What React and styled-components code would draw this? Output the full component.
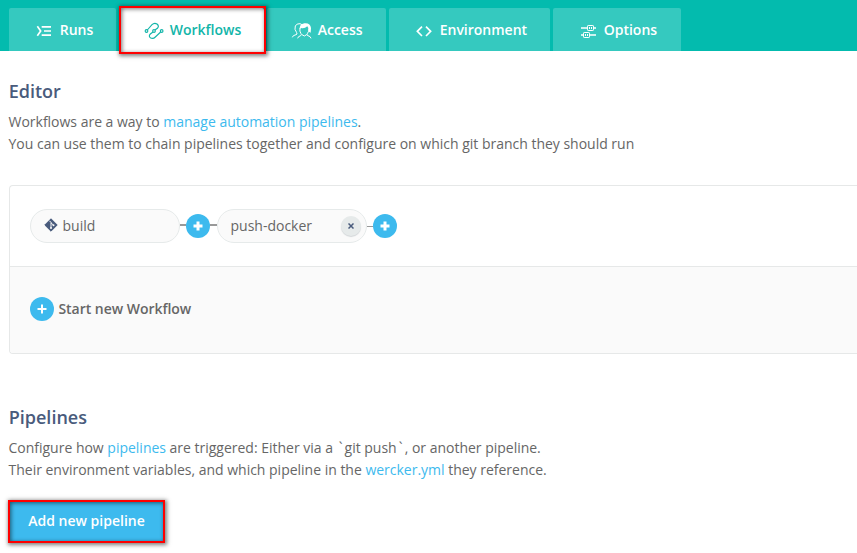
import React from "react";
import styled, { createGlobalStyle, css } from "styled-components";

const Global = createGlobalStyle`
  *, *::before, *::after { box-sizing: border-box; }
  body {
    margin: 0;
    background: #fff;
    color: #666;
    font: 14px/22px "Open Sans", "Noto Sans", sans-serif;
    overflow: hidden;
  }
`;

const TabBar = styled.nav`
  display: flex;
  gap: 3px;
  height: 51px;
  padding: 8px 9px 0;
  background: #03bbae;
`;

const highlight = css`
  &::after {
    content: "";
    position: absolute;
    inset: ${(p) => p.$inset || "0"};
    border: 2px solid #fe0000;
    box-shadow: 1px 1px 4px 1px rgba(0, 0, 0, 0.5), inset 1px 1px 4px rgba(0, 0, 0, 0.55);
    z-index: 1;
    pointer-events: none;
  }
`;

const Tab = styled.a`
  position: relative;
  display: flex;
  align-items: flex-start;
  flex: none;
  width: ${(p) => p.$width}px;
  height: 43px;
  padding: 11px 0 0 24px;
  border-radius: 2px 2px 0 0;
  background: ${(p) => (p.$active ? "#fff" : "#35c9bf")};
  color: ${(p) => (p.$active ? "#12b5a9" : "#fff")};
  font-weight: 600;
  ${(p) => p.$active && highlight}
`;

const TabIcon = styled.svg`
  flex: none;
  width: 22px;
  height: 20px;
  margin: 1px 4.7px 0 0;
  fill: none;
  stroke: currentColor;
  stroke-width: ${(p) => p.$stroke || 5};
`;

const Main = styled.main`
  padding: 29px 0 10px 9px;
`;

const Heading = styled.h2`
  margin: 0 0 8px -0.3px;
  color: #495b7c;
  font-size: 18px;
  line-height: 23px;
  font-weight: 600;
`;

const Copy = styled.p`
  margin: 0 0 0 -0.5px;
  letter-spacing: -0.01px;
  white-space: nowrap;
`;

const Tick = styled.span`
  display: inline-block;
  width: 8px;
  text-align: center;
`;

const Link = styled.a`
  color: #3dbaee;
`;

const Panel = styled.section`
  height: 169px;
  margin: 30px 0 52px;
  border: 1px solid #e6e8e8;
  border-right: 0;
  border-radius: 4px 0 0 4px;
  overflow: hidden;
`;

const Flow = styled.div`
  display: flex;
  align-items: center;
  height: 81px;
  padding-left: 20px;
  border-bottom: 1px solid #e6e8e8;
`;

const Starter = styled.div`
  display: flex;
  align-items: center;
  gap: 4.4px;
  height: 86px;
  padding: 0 0 2px 20px;
  background: #fafafa;
  font-weight: 600;
  letter-spacing: -0.03px;
`;

const Pill = styled.div`
  display: flex;
  align-items: center;
  width: 150px;
  height: 34px;
  padding: 0 5px 0 ${(p) => p.$left}px;
  border: 1px solid #e6eaea;
  border-radius: 17px;
  background: #fafafa;
`;

const GitIcon = styled.svg`
  width: 14px;
  height: 14px;
  margin: -3px 4.5px 0 0;
`;

const Connector = styled.span`
  width: ${(p) => p.$length}px;
  height: ${(p) => p.$thickness || 2}px;
  margin-top: ${(p) => (p.$thickness === 1 ? 1 : -2)}px;
  background: #999;
`;

const Round = styled.button`
  display: grid;
  place-items: center;
  flex: none;
  width: 24px;
  height: 24px;
  padding: 0;
  border: 0;
  border-radius: 50%;
  background: #3dbaee;
`;

const Remove = styled(Round)`
  width: 20px;
  height: 20px;
  margin-left: auto;
  background: #e6eaea;
  box-shadow: 0 1px 1px #d2d6d8;
`;

const AddButton = styled.button`
  position: relative;
  display: block;
  width: 157px;
  height: 43px;
  margin: 19px 0 0 -1px;
  padding: 0 0 1px;
  border: 0;
  background: #3dbaee;
  color: #fff;
  font: 600 14px/22px "Open Sans", "Noto Sans", sans-serif;
  ${highlight}
`;

const RunsIcon = () => (
  <TabIcon viewBox="99 60 66 60">
    <path d="M112 79 L122 93 L112 107 M125 80.500H153 M132 93H153 M125 105.500H153" />
  </TabIcon>
);

const WorkflowsIcon = () => (
  <TabIcon viewBox="429 60 66 60" $stroke={3.4}>
    <circle cx="439.500" cy="93" r="4" />
    <circle cx="462" cy="93" r="4" />
    <circle cx="485" cy="93" r="4" />
    <path d="M442 90 L456 74 Q463 67 471 72 Q478 78 473 84 L465 90 M459 96 L451 102 Q445 108 451 113 Q459 118 466 111 L482 96" />
  </TabIcon>
);

const AccessIcon = () => (
  <TabIcon viewBox="93 60 66 60" $stroke={3}>
    <path d="M97 112 Q98 106 108 104 Q113 103 110 98 Q102 88 106 78 Q110 70 120 71 L126 74" />
    <path d="M113 115 Q114 109 122 107 Q126 105 123 101 Q118 94 120 84 M153 115 Q152 109 144 107 Q138 105 142 101 Q148 94 146 85" />
    <path d="M119 88 Q118 72 133 70 Q151 68 153 84 L152 98 L147 95 Q149 88 142 79 Q133 87 123 84 Z" fill="currentColor" stroke="none" />
    <path d="M126 104 Q133 112 140 104" />
  </TabIcon>
);

const CodeIcon = () => (
  <TabIcon viewBox="459 60 66 60">
    <path d="M486 80 L472 94 L486 108 M498 80 L512 94 L498 108" />
  </TabIcon>
);

const OptionsIcon = () => (
  <TabIcon viewBox="141 60 66 60" $stroke={3}>
    <path d="M153 84H172 M190 84H198 M153 105H160 M179 105H198" strokeWidth="5" />
    <rect x="172.500" y="76.500" width="18" height="15" rx="2" />
    <rect x="160.500" y="97.500" width="18" height="15" rx="2" />
    <path d="M178.500 81V87 M184.500 81V87 M166.500 102V108 M172.500 102V108" />
  </TabIcon>
);

const Plus = ({ weight = 3 }) => (
  <svg width="10" height="10" viewBox="0 0 10 10">
    <path d="M5 .5V9.500 M.5 5H9.500" stroke="#fff" strokeWidth={weight} />
  </svg>
);

const tabs = [
  { label: "Runs", width: 107, Icon: RunsIcon },
  { label: "Workflows", width: 145, Icon: WorkflowsIcon, active: true },
  { label: "Access", width: 119, Icon: AccessIcon },
  { label: "Environment", width: 161, Icon: CodeIcon },
  { label: "Options", width: 128, Icon: OptionsIcon },
];

export default function App() {
  return (
    <>
      <Global />
      <TabBar>
        {tabs.map(({ label, width, Icon, active }) => (
          <Tab key={label} $width={width} $active={active} $inset="-2px -2px -3px 0">
            <Icon />
            {label}
          </Tab>
        ))}
      </TabBar>
      <Main>
        <Heading>Editor</Heading>
        <Copy>
          Workflows are a way to <Link>manage automation pipelines</Link>.<br />
          You can use them to chain pipelines together and configure on which git branch they should run
        </Copy>
        <Panel>
          <Flow>
            <Pill $left={13}>
              <GitIcon viewBox="0 0 14 14">
                <path d="M7 .8 L13.200 7 L7 13.200 L.8 7Z" fill="#495b7c" stroke="#495b7c" strokeLinejoin="round" />
                <path d="M5.500 2.800 L7 4.500 V10 M7 4.800 L9.500 7.200" stroke="#fafafa" fill="none" />
                <circle cx="7" cy="10" r="1" fill="#fafafa" />
                <circle cx="9.500" cy="7.200" r="1" fill="#fafafa" />
              </GitIcon>
              build
            </Pill>
            <Connector $length={6} />
            <Round><Plus /></Round>
            <Connector $length={7} />
            <Pill $left={12.5}>
              push-docker
              <Remove>
                <svg width="6" height="6" viewBox="0 0 6 6">
                  <path d="M.5 .5 L5.500 5.500 M5.500 .5 L.5 5.500" stroke="#495b7c" strokeWidth="1.500" />
                </svg>
              </Remove>
            </Pill>
            <Connector $length={6} $thickness={1} />
            <Round><Plus /></Round>
          </Flow>
          <Starter>
            <Round><Plus weight={2} /></Round>
            Start new Workflow
          </Starter>
        </Panel>
        <Heading>Pipelines</Heading>
        <Copy>
          Configure how <Link>pipelines</Link> are triggered: Either via a <Tick>`</Tick>git push<Tick>`</Tick>, or another pipeline.<br />
          Their environment variables, and which pipeline in the <Link>wercker.yml</Link> they reference.
        </Copy>
        <AddButton>Add new pipeline</AddButton>
      </Main>
    </>
  );
}
